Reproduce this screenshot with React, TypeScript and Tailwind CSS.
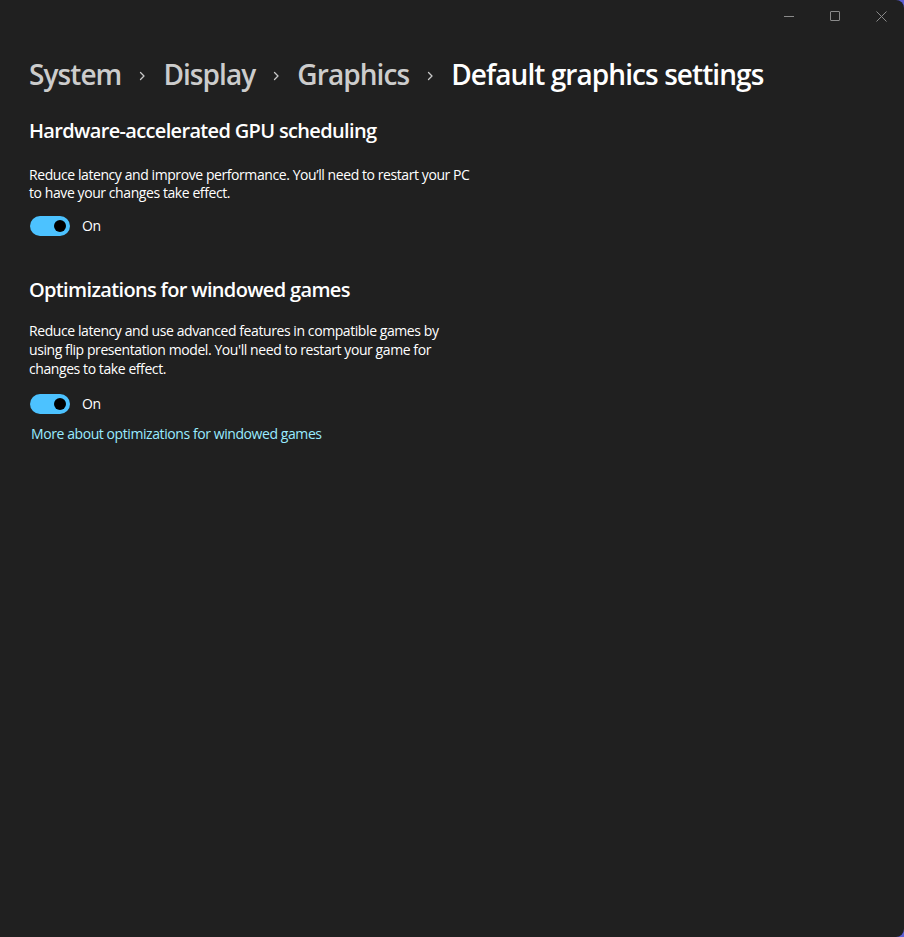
import React, { useState } from 'react';

const font = { fontFamily: '"Segoe UI", "Open Sans", "Noto Sans", sans-serif' };

const ChevronRightSmall = () => (
  <svg width="10" height="10" viewBox="0 0 10 10" className="mx-[16px] mt-[3px]">
    <path d="M3.5 1.5 L7 5 L3.5 8.5" fill="none" stroke="#c8c8c8" strokeWidth="1.3" strokeLinecap="round" strokeLinejoin="round" />
  </svg>
);

interface ToggleProps {
  on: boolean;
  onChange: () => void;
}

const Toggle: React.FC<ToggleProps> = ({ on, onChange }) => (
  <button onClick={onChange} className="flex items-center gap-3">
    <span
      className={
        on
          ? 'relative flex h-5 w-10 items-center rounded-full bg-[#4cc2ff]'
          : 'relative flex h-5 w-10 items-center rounded-full border border-[#9a9a9a]'
      }
    >
      <span
        className={
          on
            ? 'absolute right-[4px] h-[12px] w-[12px] rounded-full bg-black'
            : 'absolute left-[4px] h-[10px] w-[10px] rounded-full bg-[#cfcfcf]'
        }
      />
    </span>
    <span className="text-[14px] tracking-[-0.03em] text-white">{on ? 'On' : 'Off'}</span>
  </button>
);

export default function App() {
  const [gpu, setGpu] = useState(true);
  const [windowed, setWindowed] = useState(true);

  return (
    <div className="h-[937px] w-[904px] bg-[#5c5fd6]" style={font}>
      <div className="flex h-full w-full flex-col rounded-tr-[8px] rounded-br-[8px] bg-[#202020]">
        {/* title bar */}
        <div className="flex h-[32px] justify-end">
          <div className="flex h-full w-[46px] items-center justify-center">
            <div className="h-px w-[10px] bg-[#8a8a8a]" />
          </div>
          <div className="flex h-full w-[46px] items-center justify-center">
            <div className="h-[10px] w-[10px] rounded-[1px] border border-[#8a8a8a]" />
          </div>
          <div className="flex h-full w-[46px] items-center justify-center">
            <svg width="11" height="11" viewBox="0 0 11 11">
              <path d="M0.5 0.5 L10.5 10.5 M10.5 0.5 L0.5 10.5" stroke="#8a8a8a" strokeWidth="1" />
            </svg>
          </div>
        </div>

        <div className="px-[29px]">
          {/* breadcrumb */}
          <div className="mt-[22px] flex items-center text-[28px] font-semibold leading-[40px] tracking-[-0.033em]">
            <span className="text-[#cccccc]">System</span>
            <ChevronRightSmall />
            <span className="text-[#cccccc]">Display</span>
            <ChevronRightSmall />
            <span className="text-[#cccccc]">Graphics</span>
            <ChevronRightSmall />
            <span className="text-white">Default graphics settings</span>
          </div>

          {/* GPU scheduling */}
          <h2 className="mt-[23px] text-[20px] font-semibold leading-[28px] tracking-[-0.033em] text-white">
            Hardware-accelerated GPU scheduling
          </h2>
          <p className="mt-[21px] w-[444px] text-[14px] leading-[18px] tracking-[-0.03em] text-white">
            Reduce latency and improve performance. You’ll need to restart your PC to have your changes take effect.
          </p>
          <div className="mt-[13px] pl-px">
            <Toggle on={gpu} onChange={() => setGpu(!gpu)} />
          </div>

          {/* windowed games */}
          <h2 className="mt-[40px] text-[20px] font-semibold leading-[28px] tracking-[-0.033em] text-white">
            Optimizations for windowed games
          </h2>
          <p className="mt-[17px] w-[444px] text-[14px] leading-[19px] tracking-[-0.03em] text-white">
            Reduce latency and use advanced features in compatible games by using flip presentation model. You'll need to restart your game for changes to take effect.
          </p>
          <div className="mt-[15px] pl-px">
            <Toggle on={windowed} onChange={() => setWindowed(!windowed)} />
          </div>
          <a className="mt-[10px] block pl-[2px] text-[14px] leading-[20px] tracking-[-0.03em] text-[#99ebff]" href="#">
            More about optimizations for windowed games
          </a>
        </div>
      </div>
    </div>
  );
}
